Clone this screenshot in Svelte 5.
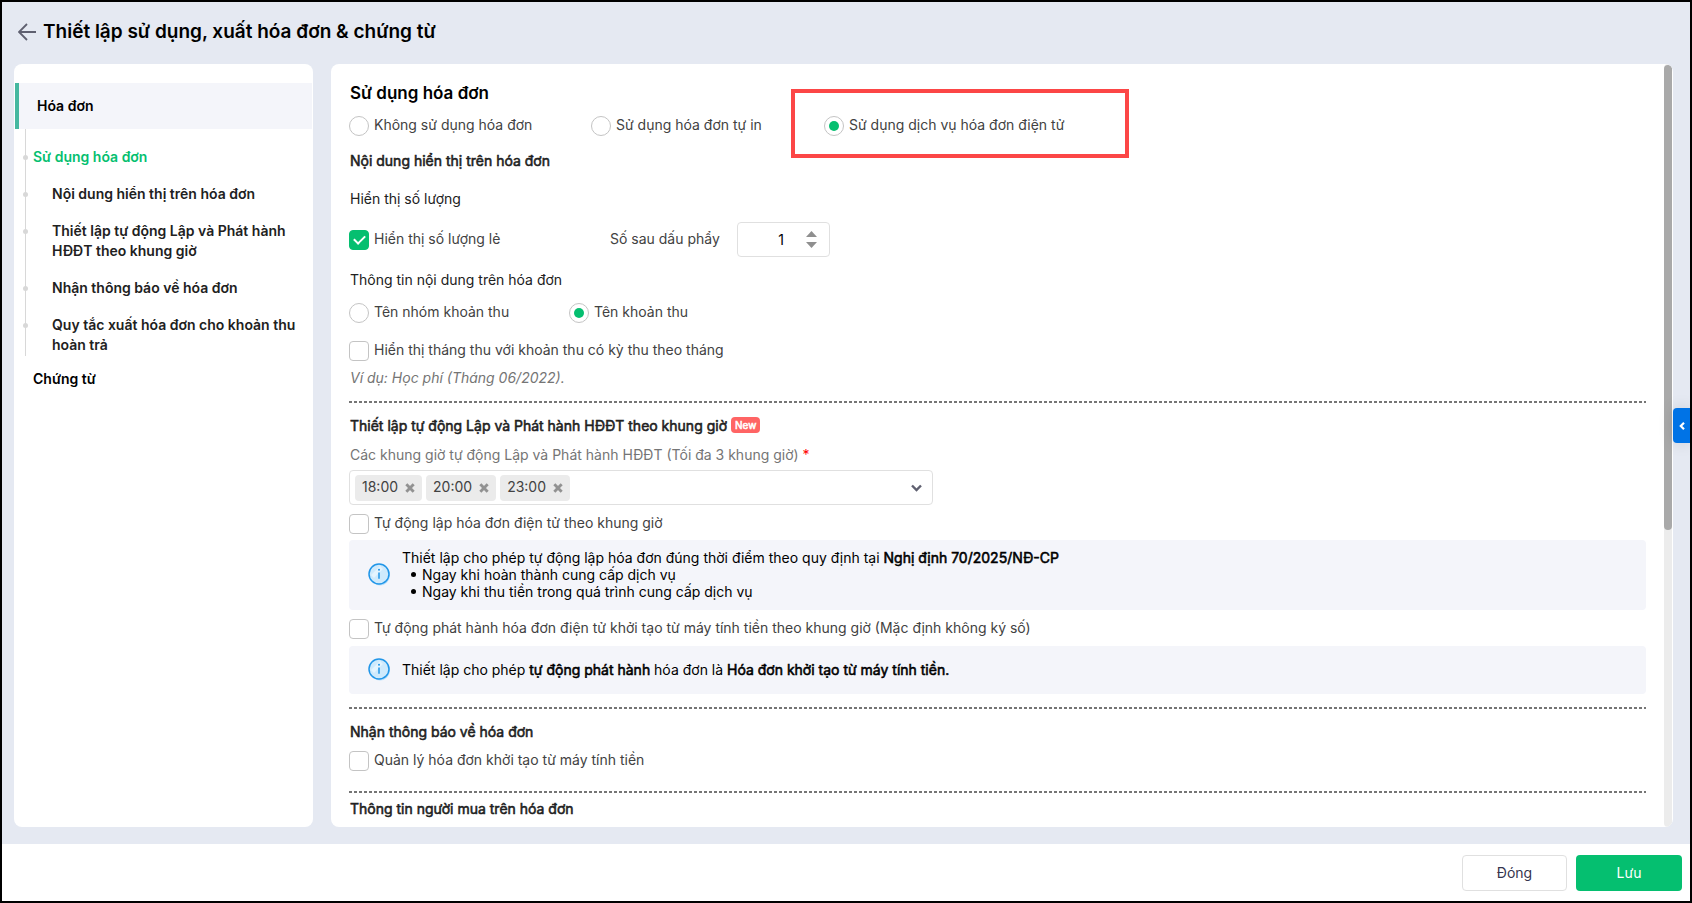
<script>
  const menu = [
    { text: 'Sử dụng hóa đơn', active: true },
    { text: 'Nội dung hiển thị trên hóa đơn' },
    { text: 'Thiết lập tự động Lập và Phát hành HĐĐT theo khung giờ' },
    { text: 'Nhận thông báo về hóa đơn' },
    { text: 'Quy tắc xuất hóa đơn cho khoản thu hoàn trả' }
  ];

  let usage = $state('service');
  let source = $state('item');
  let showDecimals = $state(true);
  let showMonth = $state(false);
  let autoCreate = $state(false);
  let autoIssue = $state(false);
  let manage = $state(false);
  let decimals = $state(1);
  let slots = $state(['18:00', '20:00', '23:00']);
</script>

{#snippet infoIcon()}
  <svg class="info-icon" viewBox="0 0 24 24" width="24" height="24" aria-hidden="true">
    <circle cx="13" cy="13.5" r="10" fill="#b7dffb" />
    <circle cx="12" cy="12" r="10" fill="#cfeafc" stroke="#2196e8" stroke-width="1.5" />
    <path d="M5.5 14.5 14.5 5.5" stroke="#e4f4fe" stroke-width="4" />
    <circle cx="12" cy="7.8" r="1" fill="#2196e8" />
    <path d="M12 10.5v6.2" stroke="#2196e8" stroke-width="1.5" />
  </svg>
{/snippet}

<div class="page">
  <header>
    <button class="back" aria-label="Quay lại">
      <svg width="18" height="18" viewBox="0 0 18 18" fill="none" stroke="#5f6070" stroke-width="1.8">
        <path d="M9 1 1 9l8 8M1 9h17" />
      </svg>
    </button>
    <h1>Thiết lập sử dụng, xuất hóa đơn &amp; chứng từ</h1>
  </header>

  <div class="body">
    <nav>
      <a class="group" href="#hoa-don">Hóa đơn</a>
      <ul>
        {#each menu as item}
          <li class:active={item.active}><a href="#hoa-don">{item.text}</a></li>
        {/each}
      </ul>
      <a class="other" href="#chung-tu">Chứng từ</a>
    </nav>

    <main>
      <div class="content">
        <h2>Sử dụng hóa đơn</h2>
        <div class="choices three">
          <label class="opt"><input type="radio" value="none" bind:group={usage} /><span>Không sử dụng hóa đơn</span></label>
          <label class="opt"><input type="radio" value="print" bind:group={usage} /><span>Sử dụng hóa đơn tự in</span></label>
          <div class="marked">
            <label class="opt"><input type="radio" value="service" bind:group={usage} /><span>Sử dụng dịch vụ hóa đơn điện tử</span></label>
          </div>
        </div>

        <h3 class="first">Nội dung hiển thị trên hóa đơn</h3>
        <p class="sub">Hiển thị số lượng</p>
        <div class="choices decimals">
          <label class="opt"><input type="checkbox" bind:checked={showDecimals} /><span>Hiển thị số lượng lẻ</span></label>
          <label class="caption" for="decimals">Số sau dấu phẩy</label>
          <div class="number">
            <input id="decimals" type="text" inputmode="numeric" bind:value={decimals} />
            <div class="steps">
              <button aria-label="Tăng" onclick={() => decimals++}>
                <svg width="11" height="6" viewBox="0 0 11 6"><path d="M0 6 5.5 0 11 6z" fill="#8f8f8f" /></svg>
              </button>
              <button aria-label="Giảm" onclick={() => decimals--}>
                <svg width="11" height="6" viewBox="0 0 11 6"><path d="M0 0h11L5.5 6z" fill="#8f8f8f" /></svg>
              </button>
            </div>
          </div>
        </div>

        <p class="sub second">Thông tin nội dung trên hóa đơn</p>
        <div class="choices two">
          <label class="opt"><input type="radio" value="group" bind:group={source} /><span>Tên nhóm khoản thu</span></label>
          <label class="opt"><input type="radio" value="item" bind:group={source} /><span>Tên khoản thu</span></label>
        </div>
        <label class="opt month"><input type="checkbox" bind:checked={showMonth} /><span>Hiển thị tháng thu với khoản thu có kỳ thu theo tháng</span></label>
        <p class="example">Ví dụ: Học phí (Tháng 06/2022).</p>

        <hr />
        <h3 class="spaced">Thiết lập tự động Lập và Phát hành HĐĐT theo khung giờ<span class="new">New</span></h3>
        <p class="field">Các khung giờ tự động Lập và Phát hành HĐĐT (Tối đa 3 khung giờ) <span class="required">*</span></p>
        <div class="tags">
          {#each slots as slot}
            <span class="tag">
              {slot}
              <button aria-label="Xóa" onclick={() => (slots = slots.filter((s) => s !== slot))}>
                <svg width="10" height="10" viewBox="0 0 9 9"><path d="m1.2 1.2 6.6 6.6m0-6.6L1.2 7.8" stroke="#929292" stroke-width="2.6" /></svg>
              </button>
            </span>
          {/each}
          <button class="open" aria-label="Mở danh sách">
            <svg width="11" height="8" viewBox="0 0 11 8" fill="none"><path d="m1 1.5 4.5 4.5L10 1.5" stroke="#5f6070" stroke-width="2.4" /></svg>
          </button>
        </div>

        <label class="opt auto"><input type="checkbox" bind:checked={autoCreate} /><span>Tự động lập hóa đơn điện tử theo khung giờ</span></label>
        <div class="note tall">
          {@render infoIcon()}
          <div>
            <p>Thiết lập cho phép tự động lập hóa đơn đúng thời điểm theo quy định tại <b>Nghị định 70/2025/NĐ-CP</b></p>
            <ul>
              <li>Ngay khi hoàn thành cung cấp dịch vụ</li>
              <li>Ngay khi thu tiền trong quá trình cung cấp dịch vụ</li>
            </ul>
          </div>
        </div>
        <label class="opt auto"><input type="checkbox" bind:checked={autoIssue} /><span>Tự động phát hành hóa đơn điện tử khởi tạo từ máy tính tiền theo khung giờ (Mặc định không ký số)</span></label>
        <div class="note">
          {@render infoIcon()}
          <p>Thiết lập cho phép <b>tự động phát hành</b> hóa đơn là <b>Hóa đơn khởi tạo từ máy tính tiền.</b></p>
        </div>

        <hr />
        <h3 class="spaced">Nhận thông báo về hóa đơn</h3>
        <label class="opt manage"><input type="checkbox" bind:checked={manage} /><span>Quản lý hóa đơn khởi tạo từ máy tính tiền</span></label>

        <hr class="wide" />
        <h3 class="last">Thông tin người mua trên hóa đơn</h3>
      </div>
      <div class="scrollbar"><div class="thumb"></div></div>
    </main>
  </div>

  <footer>
    <button class="close">Đóng</button>
    <button class="save">Lưu</button>
  </footer>

  <button class="drawer" aria-label="Mở bảng bên">
    <svg width="6" height="8" viewBox="0 0 6 8" fill="none"><path d="M5 .8 1.8 4 5 7.200" stroke="#fff" stroke-width="2.2" /></svg>
  </button>
</div>

<style>
  :global(body) {
    margin: 0;
  }
  .page,
  .page *,
  .page *::before,
  .page *::after {
    box-sizing: border-box;
  }
  .page {
    position: relative;
    display: flex;
    flex-direction: column;
    height: 100vh;
    border: 2px solid #000;
    background: #e5e9f2;
    color: #212121;
    font: 400 14px/20px Inter, sans-serif;
    overflow: hidden;
  }
  button,
  input {
    font: inherit;
    margin: 0;
  }
  button {
    padding: 0;
    border: 0;
    background: none;
    cursor: pointer;
  }
  svg {
    display: block;
  }
  a {
    color: inherit;
    text-decoration: none;
  }
  h1,
  h2,
  h3,
  p,
  ul {
    margin: 0;
    padding: 0;
    font-size: inherit;
    font-weight: inherit;
    list-style: none;
  }
  h3,
  b {
    font-weight: 400;
    -webkit-text-stroke: 0.04em currentColor;
  }

  header {
    flex: none;
    display: flex;
    align-items: center;
    gap: 7px;
    height: 62px;
    padding: 0 16px 2px;
  }
  h1 {
    color: #000;
    font-size: 19px;
    font-weight: 600;
    line-height: 28px;
  }

  .body {
    flex: 1;
    min-height: 0;
    display: flex;
    gap: 18px;
    padding: 0 17px 17px 12px;
  }
  nav,
  main {
    background: #fff;
    border-radius: 8px;
  }
  nav {
    flex: none;
    width: 299px;
    padding: 19px 1px;
    font-weight: 600;
  }
  .group {
    display: flex;
    align-items: center;
    height: 46px;
    padding: 0 18px 1px;
    border-left: 4px solid #45b8a0;
    background: #f4f5fa;
    color: #000;
  }
  nav ul {
    display: flex;
    flex-direction: column;
    gap: 17px;
    margin-left: 10px;
    padding: 18px 0 1px;
    border-left: 1px solid #d8d8d8;
  }
  nav li {
    position: relative;
    padding: 0 12px 0 26px;
  }
  nav li::before {
    content: '';
    position: absolute;
    left: -3px;
    top: 8px;
    width: 5px;
    height: 5px;
    border-radius: 50%;
    background: #d8d8d8;
  }
  nav li.active {
    padding-left: 7px;
    color: #05bf70;
  }
  .other {
    display: block;
    padding: 13px 18px;
    color: #000;
  }

  main {
    flex: 1;
    min-width: 0;
    display: flex;
    padding-right: 1px;
    overflow: hidden;
  }
  .content {
    flex: 1;
    min-width: 0;
    padding: 17px 18px 0;
    overflow: hidden;
  }
  .scrollbar {
    flex: none;
    width: 8px;
    padding-top: 1px;
    border-radius: 4px;
    background: #ececec;
  }
  .thumb {
    height: 61%;
    border-radius: 4px;
    background: #a9a9a9;
  }

  h2 {
    color: #000;
    font-size: 17px;
    font-weight: 600;
    line-height: 24px;
  }
  h2,
  h3,
  .sub,
  .example,
  .field {
    padding-left: 1px;
  }
  .choices {
    display: grid;
    align-items: center;
  }
  .three {
    grid-template-columns: 242px 233px auto;
    margin-top: 11px;
  }
  .two {
    grid-template-columns: 220px auto;
    margin-top: 13px;
  }
  .decimals {
    grid-template-columns: 261px 127px 93px;
    margin-top: 13px;
  }
  .opt {
    display: flex;
    align-items: center;
    gap: 5px;
    color: #424242;
  }
  .opt span {
    padding-bottom: 2px;
    line-height: 18px;
  }
  .opt input {
    appearance: none;
    flex: none;
    display: grid;
    place-items: center;
    width: 20px;
    height: 20px;
    border: 1px solid #c4c4c4;
    border-radius: 4px;
    background: #fff;
  }
  .opt input[type='radio'] {
    border-radius: 50%;
  }
  .opt input[type='radio']:checked::before {
    content: '';
    width: 10px;
    height: 10px;
    border-radius: 50%;
    background: #05bf70;
  }
  .opt input[type='checkbox']:checked {
    border-color: #05bf70;
    background: #05bf70;
  }
  .opt input[type='checkbox']:checked::before {
    content: '';
    width: 11px;
    height: 7px;
    margin-bottom: 3px;
    border: solid #fff;
    border-width: 0 0 2px 2px;
    transform: rotate(-45deg);
  }
  .marked {
    position: relative;
  }
  .marked::after {
    content: '';
    position: absolute;
    left: -33px;
    top: -27px;
    width: 338px;
    height: 69px;
    border: 4px solid #fc4646;
    pointer-events: none;
  }
  .first {
    margin-top: 15px;
  }
  .sub {
    margin-top: 18px;
  }
  .sub.second {
    margin-top: 13px;
  }
  .caption {
    padding-bottom: 2px;
    color: #424242;
  }
  .number {
    display: flex;
    align-items: center;
    height: 35px;
    padding-right: 12px;
    border: 1px solid #e0e0e0;
    border-radius: 4px;
  }
  .number input {
    flex: 1;
    min-width: 0;
    padding: 0 22px 0 0;
    border: 0;
    outline: 0;
    background: none;
    color: #000;
    text-align: right;
  }
  .steps {
    display: grid;
    gap: 5px;
  }
  .month {
    margin-top: 18px;
  }
  .example {
    margin-top: 7px;
    color: #757575;
    font-style: italic;
  }
  hr {
    height: 2px;
    margin: 13px 0 0;
    border: 0;
    background: repeating-linear-gradient(90deg, #757575 0 3px, transparent 3px 5px);
  }
  hr.wide {
    margin-top: 20px;
  }
  .spaced {
    display: flex;
    align-items: center;
    gap: 4px;
    margin-top: 13px;
  }
  .new {
    padding: 0 4px;
    margin-bottom: 2px;
    border-radius: 4px;
    background: #ff6464;
    color: #fff;
    font-size: 10px;
    line-height: 16px;
  }
  .field {
    margin-top: 9px;
    color: #757575;
  }
  .required {
    color: #f00;
  }
  .tags {
    display: flex;
    align-items: center;
    gap: 4px;
    width: 45%;
    height: 35px;
    margin-top: 5px;
    padding: 0 10px 0 5px;
    border: 1px solid #e0e0e0;
    border-radius: 4px;
  }
  .tag {
    display: flex;
    align-items: center;
    gap: 7px;
    height: 26px;
    padding: 0 7px 2px;
    border-radius: 4px;
    background: #ebebeb;
    color: #424242;
  }
  .tag button {
    padding-top: 2px;
  }
  .open {
    margin-left: auto;
  }
  .auto {
    margin-top: 9px;
  }
  .note {
    display: flex;
    align-items: center;
    gap: 11px;
    min-height: 48px;
    margin-top: 7px;
    padding: 0 18px 2px;
    border-radius: 4px;
    background: #f4f5fa;
    color: #000;
    line-height: 17px;
  }
  .tall {
    min-height: 70px;
    margin-top: 6px;
  }
  .info-icon {
    flex: none;
  }
  .note li {
    display: flex;
    align-items: center;
    gap: 6px;
    padding-left: 9px;
  }
  .note li::before {
    content: '';
    width: 5px;
    height: 5px;
    border-radius: 50%;
    background: #000;
  }
  .manage {
    margin-top: 9px;
  }
  .last {
    margin-top: 6px;
  }

  footer {
    flex: none;
    display: flex;
    justify-content: flex-end;
    gap: 9px;
    padding: 11px 8px 10px;
    background: #fff;
  }
  footer button {
    height: 36px;
    border-radius: 4px;
  }
  .close {
    width: 105px;
    border: 1px solid #e0e0e0;
    background: #fff;
    color: #35354e;
  }
  .save {
    width: 106px;
    background: #05bf70;
    color: #fff;
  }
  .drawer {
    position: absolute;
    right: 0;
    top: 406px;
    display: grid;
    place-items: center;
    width: 17px;
    height: 35px;
    border-radius: 4px 0 0 4px;
    background: #0073e6;
    box-shadow: 0 0 16px rgba(0, 0, 0, 0.12);
  }
</style>
